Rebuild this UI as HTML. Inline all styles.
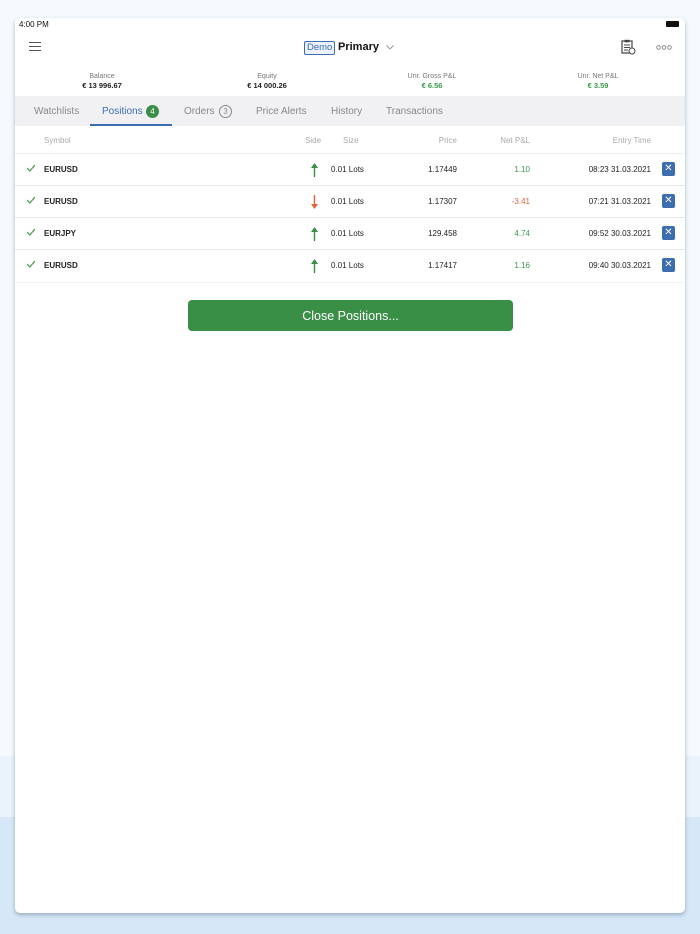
<!DOCTYPE html>
<html><head><style>
*{margin:0;padding:0;box-sizing:border-box}
body{width:700px;height:934px;font-family:"Liberation Sans",sans-serif;background:linear-gradient(#f5fafe 0,#f5fafe 756px,#eaf3fc 756px,#eaf3fc 817px,#d6e8f8 817px);position:relative;overflow:hidden}
.card{position:absolute;left:15px;top:18px;width:670px;height:895px;background:#fff;border-radius:5px;box-shadow:0 2px 4px rgba(80,100,120,.45);overflow:hidden}
.a{position:absolute}
.lbl{font-size:7px;color:#777;text-align:center;width:120px}
.val{font-size:7.5px;font-weight:bold;color:#222;text-align:center;width:120px}
.tabs{position:absolute;left:0;top:78px;width:670px;height:30px;background:#f1f1f4}
.tab{position:absolute;top:10px;font-size:10px;color:#888}
.hd{position:absolute;top:118px;font-size:8px;color:#aaa}
.row{position:absolute;left:0;width:670px;height:32px;border-bottom:1px solid #e6e6e6;font-size:8px;color:#222}
.row span{position:absolute;top:11px}
.r{text-align:right;width:80px}
.x{position:absolute;left:647px;top:8px;width:13px;height:14px;background:#3b6db0;border-radius:2px;color:#fff;font-size:10px;text-align:center;line-height:14px}
.ck{position:absolute;left:11px;top:10px}
.ar{position:absolute;left:296px;top:9px}
</style></head><body>
<div class="card">
<div class="a" style="left:4px;top:2px;font-size:8px;color:#111">4:00 PM</div>
<div class="a" style="left:651px;top:3px;width:13px;height:6px;background:#111;border-radius:1px"></div>
<div class="a" style="left:14px;top:24px;width:12px;height:1.3px;background:#555;box-shadow:0 4px 0 #555,0 8px 0 #555"></div>
<div class="a" style="left:289px;top:23px;border:1px solid #3b6db0;border-radius:2px;color:#3b6db0;font-size:9.5px;padding:0 2px;line-height:12px;background:#eef3fb">Demo</div>
<div class="a" style="left:323px;top:23px;font-size:11px;font-weight:bold;color:#111">Primary</div>
<svg class="a" style="left:371px;top:27px" width="8" height="5" viewBox="0 0 8 5"><path d="M0.5 0.5L4 4L7.5 0.5" fill="none" stroke="#999"/></svg>
<svg class="a" style="left:605px;top:21px" width="16" height="16" viewBox="0 0 16 16"><rect x="2" y="2" width="10" height="12" fill="none" stroke="#444" stroke-width="1.2"/><rect x="4.5" y="0.8" width="5" height="2.5" fill="#444"/><path d="M4 6h6M4 8.5h6M4 11h4" stroke="#444"/><circle cx="12" cy="12" r="3" fill="#fff" stroke="#444"/></svg>
<svg class="a" style="left:641px;top:27px" width="16" height="5" viewBox="0 0 16 5"><circle cx="2.5" cy="2.5" r="1.8" fill="none" stroke="#777" stroke-width=".8"/><circle cx="8" cy="2.5" r="1.8" fill="none" stroke="#777" stroke-width=".8"/><circle cx="13.5" cy="2.5" r="1.8" fill="none" stroke="#777" stroke-width=".8"/></svg>
<div class="a lbl" style="left:27px;top:55px">Balance</div><div class="a val" style="left:27px;top:63px">€ 13 996.67</div>
<div class="a lbl" style="left:192px;top:55px">Equity</div><div class="a val" style="left:192px;top:63px">€ 14 000.26</div>
<div class="a lbl" style="left:357px;top:55px">Unr. Gross P&amp;L</div><div class="a val" style="left:357px;top:63px;color:#3a9b4a">€ 6.56</div>
<div class="a lbl" style="left:523px;top:55px">Unr. Net P&amp;L</div><div class="a val" style="left:523px;top:63px;color:#3a9b4a">€ 3.59</div>
<div class="tabs">
<div class="tab" style="left:19px">Watchlists</div>
<div class="tab" style="left:87px;color:#3b6db0">Positions</div>
<div class="a" style="left:131px;top:9px;width:13px;height:13px;border-radius:7px;background:#3a8f47;color:#fff;font-size:8px;text-align:center;line-height:13px">4</div>
<div class="a" style="left:75px;top:28px;width:82px;height:2px;background:#3b6db0"></div>
<div class="tab" style="left:169px">Orders</div>
<div class="a" style="left:204px;top:9px;width:13px;height:13px;border-radius:7px;border:1px solid #888;color:#888;font-size:8px;text-align:center;line-height:11px">3</div>
<div class="tab" style="left:241px">Price Alerts</div>
<div class="tab" style="left:316px">History</div>
<div class="tab" style="left:371px">Transactions</div>
</div>
<div class="hd" style="left:29px">Symbol</div>
<div class="hd" style="left:290px">Side</div>
<div class="hd" style="left:328px">Size</div>
<div class="hd r" style="left:362px">Price</div>
<div class="hd r" style="left:435px">Net P&amp;L</div>
<div class="hd r" style="left:556px">Entry Time</div>
<div class="a" style="left:0;top:135px;width:670px;height:1px;background:#eee"></div>

<div class="row" style="top:136px"><svg class="ck" width="10" height="8" viewBox="0 0 10 8"><path d="M1 4L3.8 7L9 1" fill="none" stroke="#3a9b4a" stroke-width="1.2"/></svg><span style="left:29px;font-weight:bold">EURUSD</span><svg class="ar" width="7" height="14" viewBox="0 0 7 14"><path d="M3.5 0L7 5H4.2V14H2.8V5H0Z" fill="#3a8f47"/></svg><span style="left:316px">0.01 Lots</span><span class="r" style="left:362px">1.17449</span><span class="r" style="left:435px;color:#3a9b4a">1.10</span><span class="r" style="left:556px">08:23 31.03.2021</span><div class="x">✕</div></div>
<div class="row" style="top:168px"><svg class="ck" width="10" height="8" viewBox="0 0 10 8"><path d="M1 4L3.8 7L9 1" fill="none" stroke="#3a9b4a" stroke-width="1.2"/></svg><span style="left:29px;font-weight:bold">EURUSD</span><svg class="ar" width="7" height="14" viewBox="0 0 7 14"><path d="M3.5 14L7 9H4.2V0H2.8V9H0Z" fill="#e0603a"/></svg><span style="left:316px">0.01 Lots</span><span class="r" style="left:362px">1.17307</span><span class="r" style="left:435px;color:#e0603a">-3.41</span><span class="r" style="left:556px">07:21 31.03.2021</span><div class="x">✕</div></div>
<div class="row" style="top:200px"><svg class="ck" width="10" height="8" viewBox="0 0 10 8"><path d="M1 4L3.8 7L9 1" fill="none" stroke="#3a9b4a" stroke-width="1.2"/></svg><span style="left:29px;font-weight:bold">EURJPY</span><svg class="ar" width="7" height="14" viewBox="0 0 7 14"><path d="M3.5 0L7 5H4.2V14H2.8V5H0Z" fill="#3a8f47"/></svg><span style="left:316px">0.01 Lots</span><span class="r" style="left:362px">129.458</span><span class="r" style="left:435px;color:#3a9b4a">4.74</span><span class="r" style="left:556px">09:52 30.03.2021</span><div class="x">✕</div></div>
<div class="row" style="top:232px;border-bottom:none"><svg class="ck" width="10" height="8" viewBox="0 0 10 8"><path d="M1 4L3.8 7L9 1" fill="none" stroke="#3a9b4a" stroke-width="1.2"/></svg><span style="left:29px;font-weight:bold">EURUSD</span><svg class="ar" width="7" height="14" viewBox="0 0 7 14"><path d="M3.5 0L7 5H4.2V14H2.8V5H0Z" fill="#3a8f47"/></svg><span style="left:316px">0.01 Lots</span><span class="r" style="left:362px">1.17417</span><span class="r" style="left:435px;color:#3a9b4a">1.16</span><span class="r" style="left:556px">09:40 30.03.2021</span><div class="x">✕</div></div>
<div class="a" style="left:0;top:264px;width:670px;height:1px;background:#f3f3f3"></div>

<div class="a" style="left:173px;top:282px;width:325px;height:31px;background:#3a8f47;border-radius:4px;color:#fff;font-size:12.5px;text-align:center;line-height:32px">Close Positions...</div>
</div>
</body></html>
